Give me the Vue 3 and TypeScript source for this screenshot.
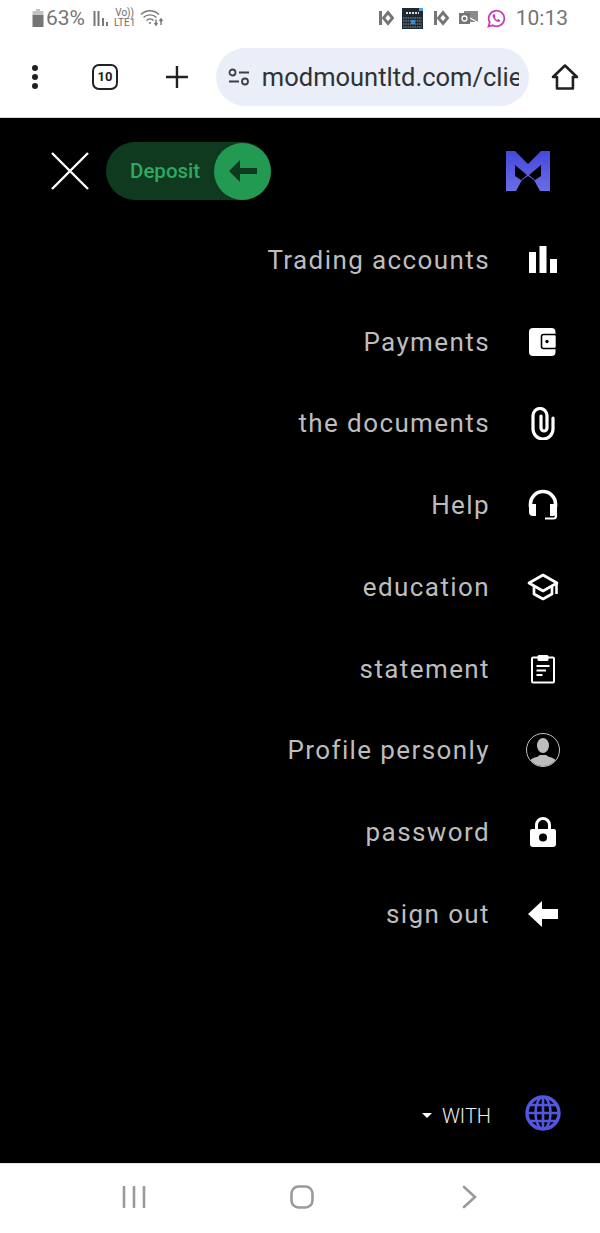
<template>
  <div class="phone">
    <!-- Status bar -->
    <div class="status-bar">
      <div class="status-left">
        <svg class="battery" width="14" height="20" viewBox="0 0 14 20">
          <path d="M5 1h4v2h3.500v4h-11v-4h3.500z" fill="#c4c4c4" />
          <rect x="1.500" y="7" width="11" height="12" fill="#757575" />
        </svg>
        <span class="status-percent">63%</span>
        <svg class="signal" width="19" height="17" viewBox="0 0 19 17">
          <path d="M1.500 1v15M5.500 1v15M10 8v8M14 12v4" stroke="#777" stroke-width="2" fill="none" />
        </svg>
        <div class="volte"><span>Vo))</span><span>LTE1</span></div>
        <svg class="wifi" width="24" height="18" viewBox="0 0 24 18" fill="none" stroke="#777" stroke-width="1.400">
          <path d="M1 5.500C6 .5 14 .5 19 5.500" />
          <path d="M3.500 8.500C7 5 13 5 16.500 8.500" />
          <path d="M6.500 11.500C8.500 9.500 11.500 9.500 13.500 11.500" />
          <circle cx="10" cy="14" r="1" fill="#777" stroke="none" />
          <path d="M16 10.500v5M14.500 14l1.500 2 1.500-2M21 10v6M19.500 12l1.500-2 1.500 2" />
        </svg>
      </div>
      <div class="status-right">
        <svg class="kc" width="16" height="16" viewBox="0 0 16 16">
          <rect x="1" y="1" width="3" height="14" fill="#757575" />
          <path d="M10 2.500L14.500 8 10 13.500 5.500 8z" fill="none" stroke="#757575" stroke-width="2.800" />
        </svg>
        <svg class="keyboard" width="21" height="21" viewBox="0 0 21 21">
          <rect width="21" height="21" fill="#1d2a33" />
          <path d="M17 0h4v3h-4z" fill="#4aa3df" />
          <path d="M4 5h13" stroke="#d8dde0" stroke-width="2" stroke-dasharray="2 1" />
          <path d="M1 10h19M1 13h19M1 16h19M1 19h19" stroke="#6b7780" stroke-width="1.600" stroke-dasharray="1.500 .8" />
          <rect x="9" y="12" width="4" height="4" fill="#2f8fd8" />
        </svg>
        <svg class="kc" width="16" height="16" viewBox="0 0 16 16">
          <rect x="1" y="1" width="3" height="14" fill="#757575" />
          <path d="M10 2.500L14.500 8 10 13.500 5.500 8z" fill="none" stroke="#757575" stroke-width="2.800" />
        </svg>
        <svg class="mail" width="20" height="16" viewBox="0 0 20 16">
          <rect x="5" y="1" width="14" height="11" fill="#8a8a8a" />
          <rect y="3" width="11" height="11" fill="#757575" />
          <circle cx="5.500" cy="8.500" r="2.500" fill="none" stroke="#fff" stroke-width="1.300" />
          <path d="M11 8l8 4.500M11 14l8-1.500" stroke="#fff" stroke-width="1.200" />
        </svg>
        <svg class="whatsapp" width="19" height="19" viewBox="0 0 19 19">
          <path d="M1.500 17.500l1.200-4.200a7.800 7.800 0 1 1 3 3z" fill="none" stroke="#c43fb7" stroke-width="1.800" />
          <path d="M6.300 5.500c-1 1 -.8 2.700.8 4.700s3.600 3.200 5 2.600c1-.4 1.200-1.300 1-1.800l-2-1-.8.900c-1-.4-2.100-1.500-2.600-2.700l.8-.9-.9-2.100c-.5-.2-1 0-1.300.3z" fill="#c43fb7" />
        </svg>
        <span class="clock">10:13</span>
      </div>
    </div>

    <!-- Browser toolbar -->
    <div class="toolbar">
      <svg class="tb-menu" width="8" height="26" viewBox="0 0 8 26">
        <circle cx="4" cy="4" r="3" fill="#202124" />
        <circle cx="4" cy="13" r="3" fill="#202124" />
        <circle cx="4" cy="22" r="3" fill="#202124" />
      </svg>
      <div class="tab-count">10</div>
      <svg class="tb-plus" width="24" height="24" viewBox="0 0 24 24">
        <path d="M12 1v22M1 12h22" stroke="#202124" stroke-width="2.400" />
      </svg>
      <div class="url-pill">
        <svg class="tune" width="22" height="18" viewBox="0 0 22 18" fill="none" stroke="#3c4043" stroke-width="1.800">
          <circle cx="4.500" cy="4.500" r="3" />
          <path d="M11 4.500h10M1 13.500h10" />
          <circle cx="17" cy="13.500" r="3" />
        </svg>
        <span class="url-text">modmountltd.com/clie</span>
      </div>
      <svg class="tb-home" width="28" height="28" viewBox="0 0 28 28" fill="none" stroke="#202124" stroke-width="2.600" stroke-linejoin="round">
        <path d="M2 14L14 2.500 26 14h-4v11.500H6V14z" />
      </svg>
    </div>

    <!-- Black side menu -->
    <main class="menu">
      <header class="menu-head">
        <svg class="close" width="40" height="40" viewBox="0 0 40 40">
          <path d="M2 2l36 36M38 2L2 38" stroke="#fff" stroke-width="2.400" />
        </svg>
        <button class="deposit">
          <span class="deposit-label">Deposit</span>
          <span class="deposit-knob">
            <svg width="30" height="24" viewBox="0 0 30 24">
              <path d="M1 12L12 1v8h17v6H12v8z" fill="#0f3a1f" />
            </svg>
          </span>
        </button>
        <svg class="logo" width="44" height="41" viewBox="0 0 44 41">
          <defs>
            <linearGradient id="logoFill" x1="0" y1="0" x2="0" y2="1">
              <stop offset="0" stop-color="#4548dc" />
              <stop offset="1" stop-color="#6a6de6" />
            </linearGradient>
          </defs>
          <path d="M0 0h9l13 13L35 0h9v40H34l-6-11-6-4-6 4-6 11H0z" fill="url(#logoFill)" />
          <path d="M9 14l12 10-6 5-6-4zM35 14L23 24l6 5 6-4z" fill="#000" />
        </svg>
      </header>

      <nav class="menu-list">
        <div v-for="item in items" :key="item.label" class="menu-item">
          <span class="menu-label">{{ item.label }}</span>
          <span class="menu-icon">
            <svg v-if="item.icon === 'bars'" width="30" height="30" viewBox="0 0 30 30" fill="#fff">
              <rect x="1" y="7" width="7" height="21" />
              <rect x="11.500" y="1" width="7" height="27" />
              <rect x="22" y="14" width="7" height="14" />
            </svg>
            <svg v-else-if="item.icon === 'wallet'" width="30" height="30" viewBox="0 0 30 30">
              <rect x="1" y="1" width="26.500" height="28" rx="4" fill="#fff" />
              <rect x="13.500" y="7.500" width="15" height="14" rx="2" fill="#fff" stroke="#000" stroke-width="1.600" />
              <circle cx="19" cy="14.500" r="1.700" fill="#000" />
            </svg>
            <svg v-else-if="item.icon === 'clip'" width="24" height="33" viewBox="0 0 24 33" fill="none" stroke="#fff" stroke-width="3.200">
              <path d="M22 11v11a10 10 0 0 1-20 0V8.500a7 7 0 0 1 14 0V21a3 3 0 0 1-6 0V9" stroke-linecap="round" />
            </svg>
            <svg v-else-if="item.icon === 'headset'" width="32" height="32" viewBox="0 0 32 32" fill="none" stroke="#fff">
              <path d="M3.500 18v-3a12.500 12.500 0 0 1 25 0v3" stroke-width="3.600" />
              <path d="M2 15h7v12H6a4 4 0 0 1-4-4z" fill="#fff" stroke="none" />
              <path d="M23 15h7v8a4 4 0 0 1-4 4h-3z" fill="#fff" stroke="none" />
              <path d="M29 24v3a2.500 2.500 0 0 1-2.500 2.500H18" stroke-width="2.200" />
            </svg>
            <svg v-else-if="item.icon === 'cap'" width="32" height="28" viewBox="0 0 32 28" fill="none" stroke="#fff" stroke-width="2.700">
              <path d="M16 2L2 10l14 8 14-8z" stroke-linejoin="round" />
              <path d="M7 13v8l9 5 9-5v-8" stroke-linejoin="round" />
              <path d="M29.500 10v11" stroke-width="2.600" />
            </svg>
            <svg v-else-if="item.icon === 'board'" width="26" height="30" viewBox="0 0 26 30" fill="none" stroke="#fff">
              <rect x="2" y="3.500" width="22" height="25" rx="1" stroke-width="2" />
              <rect x="7.500" y="1" width="11" height="6" rx="1.500" fill="#fff" stroke="none" />
              <path d="M6.500 12h13M6.500 16.500h9.500M6.500 21h6" stroke-width="2" />
            </svg>
            <svg v-else-if="item.icon === 'avatar'" width="34" height="34" viewBox="0 0 34 34">
              <defs>
                <clipPath id="avatarClip"><circle cx="17" cy="17" r="16" /></clipPath>
              </defs>
              <circle cx="17" cy="17" r="16.500" fill="#000" stroke="#c2c2c2" stroke-width="1" />
              <g clip-path="url(#avatarClip)" fill="#bdbdbd">
                <ellipse cx="17" cy="12.500" rx="6" ry="7.500" />
                <path d="M1 34c0-6 5-9 10-10l3-2h6l3 2c5 1 10 4 10 10z" />
              </g>
            </svg>
            <svg v-else-if="item.icon === 'lock'" width="28" height="32" viewBox="0 0 28 32">
              <path d="M7.500 14V9a6.500 6.500 0 0 1 13 0v5" fill="none" stroke="#fff" stroke-width="3" />
              <path d="M3 13h22a2 2 0 0 1 2 2v13a3 3 0 0 1-3 3H4a3 3 0 0 1-3-3V15a2 2 0 0 1 2-2z" fill="#fff" />
              <circle cx="14" cy="21.500" r="4" fill="#000" />
            </svg>
            <svg v-else-if="item.icon === 'back'" width="32" height="26" viewBox="0 0 32 26">
              <path d="M1 13L15 0v8h16v10H15v8z" fill="#fff" />
            </svg>
          </span>
        </div>
      </nav>

      <footer class="lang">
        <span class="caret"></span>
        <span class="lang-code">WITH</span>
        <svg class="globe" width="36" height="36" viewBox="0 0 36 36" fill="none" stroke="#5356e0" stroke-width="2.600">
          <circle cx="18" cy="18" r="16" fill="#000" stroke-width="3.400" />
          <ellipse cx="18" cy="18" rx="7.500" ry="16" />
          <path d="M18 2v32M2.500 18h31M5 10h26M5 26h26" />
        </svg>
      </footer>
    </main>

    <!-- Android nav bar -->
    <div class="nav-bar">
      <svg width="24" height="22" viewBox="0 0 24 22">
        <path d="M2 1v20M12 1v20M22 1v20" stroke="#9a9a9a" stroke-width="2.600" stroke-linecap="round" />
      </svg>
      <svg class="nav-home" width="24" height="24" viewBox="0 0 24 24">
        <rect x="1.500" y="1.500" width="21" height="21" rx="7" fill="none" stroke="#9a9a9a" stroke-width="2.600" />
      </svg>
      <svg width="16" height="24" viewBox="0 0 16 24">
        <path d="M2 2l11 10L2 22" fill="none" stroke="#9a9a9a" stroke-width="2.600" stroke-linecap="round" />
      </svg>
    </div>
  </div>
</template>

<script setup lang="ts">
interface MenuItem {
  label: string;
  icon: string;
}

const items: MenuItem[] = [
  { label: 'Trading accounts', icon: 'bars' },
  { label: 'Payments', icon: 'wallet' },
  { label: 'the documents', icon: 'clip' },
  { label: 'Help', icon: 'headset' },
  { label: 'education', icon: 'cap' },
  { label: 'statement', icon: 'board' },
  { label: 'Profile personly', icon: 'avatar' },
  { label: 'password', icon: 'lock' },
  { label: 'sign out', icon: 'back' },
];
</script>

<style scoped>
.phone {
  width: 600px;
  height: 1233px;
  display: flex;
  flex-direction: column;
  background: #fff;
  font-family: Roboto, "Liberation Sans", sans-serif;
  overflow: hidden;
}

.status-bar {
  height: 36px;
  padding: 0 32px 0 31px;
  display: flex;
  align-items: center;
  justify-content: space-between;
  color: #757575;
}

.status-left,
.status-right {
  display: flex;
  align-items: center;
}

.status-percent {
  font-size: 21px;
  margin-left: 1px;
  color: #757575;
}

.signal {
  margin-left: 8px;
}

.volte {
  display: flex;
  flex-direction: column;
  align-items: center;
  margin-left: 2px;
  font-size: 10px;
  line-height: 10px;
  color: #6d6d6d;
}

.wifi {
  margin-left: 5px;
}

.keyboard {
  margin-left: 8px;
  margin-right: 10px;
}

.mail {
  margin-left: 10px;
}

.whatsapp {
  margin-left: 8px;
}

.clock {
  font-size: 21px;
  margin-left: 10px;
  color: #757575;
}

.toolbar {
  height: 81px;
  padding: 0 21px 0 31px;
  display: flex;
  align-items: center;
  border-bottom: 1px solid #d8d8d8;
}

.tab-count {
  width: 26px;
  height: 26px;
  box-sizing: border-box;
  margin-left: 53px;
  border: 2.500px solid #202124;
  border-radius: 7px;
  display: flex;
  align-items: center;
  justify-content: center;
  font-size: 13px;
  font-weight: 700;
  color: #202124;
}

.tb-plus {
  margin-left: 47px;
}

.url-pill {
  width: 314px;
  height: 58px;
  margin-left: 27px;
  padding-left: 12px;
  box-sizing: border-box;
  border-radius: 29px;
  background: #e9eef8;
  display: flex;
  align-items: center;
  overflow: hidden;
}

.url-text {
  margin-left: 12px;
  width: 257px;
  overflow: hidden;
  white-space: nowrap;
  font-size: 25.500px;
  color: #2f3236;
}

.tb-home {
  margin-left: 22px;
}

.menu {
  flex: 1;
  background: #000;
  display: flex;
  flex-direction: column;
  min-height: 0;
}

.menu-head {
  height: 101px;
  box-sizing: border-box;
  padding: 5px 50px 0;
  display: flex;
  align-items: center;
}

.close {
  flex: none;
}

.deposit {
  width: 165px;
  height: 58px;
  margin-left: 16px;
  padding: 0;
  border: 0;
  border-radius: 29px;
  background: #0f3a1f;
  display: flex;
  align-items: center;
  justify-content: space-between;
  font-family: inherit;
}

.deposit-label {
  margin-left: 24px;
  font-size: 20.500px;
  font-weight: 500;
  color: #2eaa60;
}

.deposit-knob {
  width: 57px;
  height: 57px;
  border-radius: 50%;
  background: #239a52;
  display: flex;
  align-items: center;
  justify-content: center;
}

.logo {
  margin-left: auto;
}

.menu-list {
  display: flex;
  flex-direction: column;
}

.menu-item {
  height: 81.750px;
  padding-right: 40px;
  display: flex;
  align-items: center;
  justify-content: flex-end;
}

.menu-label {
  font-size: 26px;
  letter-spacing: 1.400px;
  color: #bdbdbd;
}

.menu-icon {
  width: 34px;
  margin-left: 36px;
  display: flex;
  justify-content: center;
}

.lang {
  margin-top: auto;
  height: 100px;
  padding-right: 39px;
  display: flex;
  align-items: center;
  justify-content: flex-end;
  box-sizing: border-box;
}

.caret {
  width: 0;
  height: 0;
  margin-top: 5px;
  border-left: 5px solid transparent;
  border-right: 5px solid transparent;
  border-top: 5px solid #fff;
}

.lang-code {
  margin-left: 10px;
  margin-top: 5px;
  font-size: 20px;
  font-weight: 300;
  color: #efefef;
}

.globe {
  margin-left: 34px;
}

.nav-bar {
  height: 70px;
  flex: none;
  box-sizing: border-box;
  border-top: 1px solid #e6e6e6;
  padding: 0 122px 4px;
  display: flex;
  align-items: center;
  justify-content: space-between;
}

.nav-home {
  margin-right: 4px;
}
</style>

<style>
html,
body {
  margin: 0;
  background: #fff;
}
</style>
